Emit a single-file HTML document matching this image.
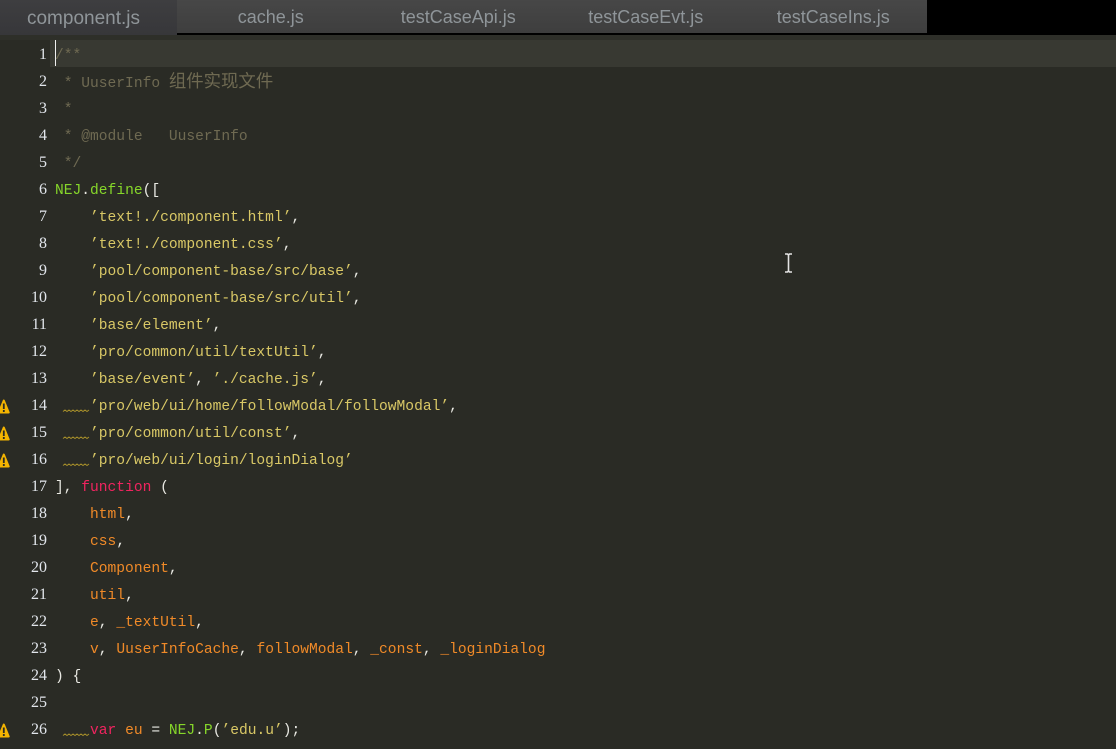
<!DOCTYPE html>
<html><head><meta charset="utf-8"><style>
html,body{margin:0;padding:0;background:#2a2b25;width:1116px;height:749px;overflow:hidden}
#t{position:absolute;left:0;top:0;width:1116px;height:35px;background:#000}
.tab{position:absolute;top:0;height:33px;width:187.5px;background:linear-gradient(#474747,#3e3e3e);color:#8f9599;font:18px/34px "Liberation Sans",sans-serif;text-align:center}
.a{left:0;width:167px;padding-right:10px;height:35px;background:linear-gradient(#3e3e40,#37373a);color:#8f9599;font-size:19px;line-height:37px}
#hl{position:absolute;left:50px;top:40px;width:1066px;height:27px;background:#383932}
#hd{position:absolute;left:0;top:35px;width:1116px;height:5px;background:#2e2f29}
#cur{position:absolute;left:55px;top:40px;width:1px;height:26px;background:#f0f0f0}
.l{position:absolute;left:55px;height:27px;margin-top:2px;font:14.6px/27px "Liberation Mono","Noto Sans CJK SC",monospace;color:#e8e8e2;white-space:pre}
.n{position:absolute;left:0;width:47px;height:27px;margin-top:0;text-align:right;font:16px/27px "Liberation Serif",serif;color:#e2e6ec}
.c{color:#6f6a52}.s{color:#d9c866}.g{color:#86d62a}.r{color:#f0245f}.o{color:#f08a28}.zh{font-size:17.4px}
svg{position:absolute}
</style></head><body>
<div id="t"></div>
<div class="tab a">component.js</div>
<div class="tab" style="left:177px">cache.js</div>
<div class="tab" style="left:364.5px">testCaseApi.js</div>
<div class="tab" style="left:552px">testCaseEvt.js</div>
<div class="tab" style="left:739.5px">testCaseIns.js</div>
<div id="hd"></div><div id="hl"></div><div id="cur"></div>

<div class="n" style="top:41px">1</div><div class="l c" style="top:41px">/**</div>
<div class="n" style="top:68px">2</div><div class="l c" style="top:68px"> * UuserInfo <span class="zh">组件实现文件</span></div>
<div class="n" style="top:95px">3</div><div class="l c" style="top:95px"> *</div>
<div class="n" style="top:122px">4</div><div class="l c" style="top:122px"> * @module   UuserInfo</div>
<div class="n" style="top:149px">5</div><div class="l c" style="top:149px"> */</div>
<div class="n" style="top:176px">6</div><div class="l" style="top:176px"><span class="g">NEJ</span>.<span class="g">define</span>([</div>
<div class="n" style="top:203px">7</div><div class="l s" style="top:203px">    ’text!./component.html’<span style="color:#e8e8e2">,</span></div>
<div class="n" style="top:230px">8</div><div class="l s" style="top:230px">    ’text!./component.css’<span style="color:#e8e8e2">,</span></div>
<div class="n" style="top:257px">9</div><div class="l s" style="top:257px">    ’pool/component-base/src/base’<span style="color:#e8e8e2">,</span></div>
<div class="n" style="top:284px">10</div><div class="l s" style="top:284px">    ’pool/component-base/src/util’<span style="color:#e8e8e2">,</span></div>
<div class="n" style="top:311px">11</div><div class="l s" style="top:311px">    ’base/element’<span style="color:#e8e8e2">,</span></div>
<div class="n" style="top:338px">12</div><div class="l s" style="top:338px">    ’pro/common/util/textUtil’<span style="color:#e8e8e2">,</span></div>
<div class="n" style="top:365px">13</div><div class="l s" style="top:365px">    ’base/event’<span style="color:#e8e8e2">, </span>’./cache.js’<span style="color:#e8e8e2">,</span></div>
<div class="n" style="top:392px">14</div><div class="l s" style="top:392px">    ’pro/web/ui/home/followModal/followModal’<span style="color:#e8e8e2">,</span></div>
<div class="n" style="top:419px">15</div><div class="l s" style="top:419px">    ’pro/common/util/const’<span style="color:#e8e8e2">,</span></div>
<div class="n" style="top:446px">16</div><div class="l s" style="top:446px">    ’pro/web/ui/login/loginDialog’</div>
<div class="n" style="top:473px">17</div><div class="l" style="top:473px">], <span class="r">function</span> (</div>
<div class="n" style="top:500px">18</div><div class="l" style="top:500px">    <span class="o">html</span>,</div>
<div class="n" style="top:527px">19</div><div class="l" style="top:527px">    <span class="o">css</span>,</div>
<div class="n" style="top:554px">20</div><div class="l" style="top:554px">    <span class="o">Component</span>,</div>
<div class="n" style="top:581px">21</div><div class="l" style="top:581px">    <span class="o">util</span>,</div>
<div class="n" style="top:608px">22</div><div class="l" style="top:608px">    <span class="o">e</span>, <span class="o">_textUtil</span>,</div>
<div class="n" style="top:635px">23</div><div class="l" style="top:635px">    <span class="o">v</span>, <span class="o">UuserInfoCache</span>, <span class="o">followModal</span>, <span class="o">_const</span>, <span class="o">_loginDialog</span></div>
<div class="n" style="top:662px">24</div><div class="l" style="top:662px">) {</div>
<div class="n" style="top:689px">25</div>
<div class="n" style="top:716px">26</div><div class="l" style="top:716px">    <span class="r">var</span> <span class="o">eu</span> = <span class="g">NEJ</span>.<span class="g">P</span>(<span class="s">’edu.u’</span>);</div>

<svg width="1116" height="749" style="left:0;top:0">
<defs>
<g id="w"><path d="M3.800 2.500L8.700 14.500H-1.200Z" fill="#f4b400" stroke="#f4b400" stroke-width="2" stroke-linejoin="round"/><path d="M3.800 5.500v5.500M3.800 12v2" stroke="#2a2b25" stroke-width="1.800" fill="none"/><path d="M63 13.500l2-1.500 2 1.500 2-1.500 2 1.500 2-1.500 2 1.500 2-1.500 2 1.500 2-1.500 2 1.500 2-1.500 2 1.500 2-1.500" fill="none" stroke="#a8902a" stroke-width="1"/></g>
</defs>
<use href="#w" x="0" y="398"/>
<use href="#w" x="0" y="425"/>
<use href="#w" x="0" y="452"/>
<use href="#w" x="0" y="722"/>
<path d="M785 254h2.500l1 1 1-1h2.500M788.500 255v16M785 272h2.500l1-1 1 1h2.500" fill="none" stroke="#e4e4e4" stroke-width="1.600"/>
</svg>
</body></html>
